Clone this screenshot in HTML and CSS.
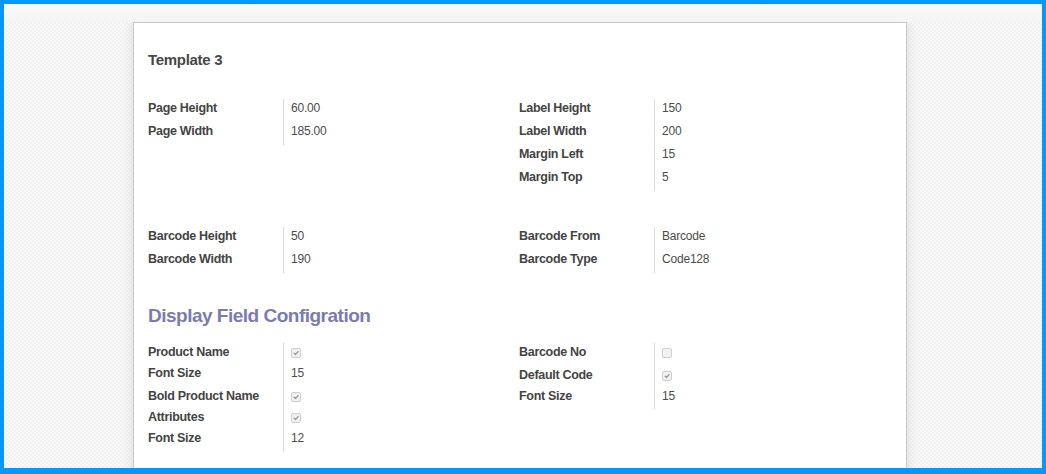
FILE: index.html
```html
<!DOCTYPE html>
<html lang="en">
<head>
<meta charset="utf-8">
<title>Template 3</title>
<link rel="stylesheet" href="styles.css">
</head>
<body>
<div class="frame">
  <div class="topbar"></div>
  <div class="canvas">
    <div class="sheet">
      <h2 class="title">Template 3</h2>

      <div class="groups g-first">
        <div class="group">
          <div class="row"><div class="lbl">Page Height</div><div class="val">60.00</div></div>
          <div class="row"><div class="lbl">Page Width</div><div class="val">185.00</div></div>
        </div>
        <div class="group">
          <div class="row"><div class="lbl">Label Height</div><div class="val">150</div></div>
          <div class="row"><div class="lbl">Label Width</div><div class="val">200</div></div>
          <div class="row"><div class="lbl">Margin Left</div><div class="val">15</div></div>
          <div class="row"><div class="lbl">Margin Top</div><div class="val">5</div></div>
        </div>
      </div>

      <div class="groups g-second">
        <div class="group">
          <div class="row"><div class="lbl">Barcode Height</div><div class="val">50</div></div>
          <div class="row"><div class="lbl">Barcode Width</div><div class="val">190</div></div>
        </div>
        <div class="group">
          <div class="row"><div class="lbl">Barcode From</div><div class="val">Barcode</div></div>
          <div class="row"><div class="lbl">Barcode Type</div><div class="val">Code128</div></div>
        </div>
      </div>

      <h3 class="separator">Display Field Configration</h3>

      <div class="groups g-third">
        <div class="group">
          <div class="row short"><div class="lbl">Product Name</div><div class="val"><span class="cb checked"><svg viewBox="0 0 10 10"><path d="M2.6 5.2 L4.3 6.9 L7.6 3.2"/></svg></span></div></div>
          <div class="row"><div class="lbl">Font Size</div><div class="val">15</div></div>
          <div class="row short"><div class="lbl">Bold Product Name</div><div class="val"><span class="cb checked"><svg viewBox="0 0 10 10"><path d="M2.6 5.2 L4.3 6.9 L7.6 3.2"/></svg></span></div></div>
          <div class="row short"><div class="lbl">Attributes</div><div class="val"><span class="cb checked"><svg viewBox="0 0 10 10"><path d="M2.6 5.2 L4.3 6.9 L7.6 3.2"/></svg></span></div></div>
          <div class="row"><div class="lbl">Font Size</div><div class="val">12</div></div>
        </div>
        <div class="group">
          <div class="row"><div class="lbl">Barcode No</div><div class="val"><span class="cb"></span></div></div>
          <div class="row short"><div class="lbl">Default Code</div><div class="val"><span class="cb checked"><svg viewBox="0 0 10 10"><path d="M2.6 5.2 L4.3 6.9 L7.6 3.2"/></svg></span></div></div>
          <div class="row mid"><div class="lbl">Font Size</div><div class="val">15</div></div>
        </div>
      </div>
    </div>
  </div>
</div>
</body>
</html>
```
FILE: styles.css
```css
* { box-sizing: border-box; }

html, body {
  margin: 0;
  padding: 0;
  background: #ffffff;
}

body {
  font-family: "Liberation Sans", Arial, sans-serif;
  color: #4c4c4c;
}

.frame {
  width: 1046px;
  height: 474px;
  border-style: solid;
  border-color: #0398fc;
  border-width: 4px 4px 6px 4px;
  display: flex;
  flex-direction: column;
  overflow: hidden;
}

.topbar {
  height: 18px;
  flex: none;
  background: linear-gradient(#f9f9f9, #f4f4f4);
}

.canvas {
  flex: 1;
  overflow: hidden;
  padding-left: 129px;
  background-color: #f6f6f6;
  background-image: repeating-conic-gradient(#f1f1f1 0 25%, #f9f9f9 0 50%);
  background-size: 4px 4px;
}

.sheet {
  width: 774px;
  min-height: 520px;
  background: #ffffff;
  border: 1px solid #c8c8d3;
  box-shadow: 0 0 10px rgba(0, 0, 0, 0.12);
  padding: 28px 16px 0 14px;
}

.title {
  margin: 0;
  font-size: 15px;
  line-height: 18px;
  font-weight: bold;
  letter-spacing: -0.3px;
  color: #474747;
}

.groups {
  display: grid;
  grid-template-columns: 1fr 1fr;
  align-items: start;
}

.g-first { margin-top: 30px; }
.g-second { margin-top: 36px; }
.g-third { margin-top: 16px; }

.row {
  display: flex;
  height: 23px;
}

.row.short { height: 21px; }
.row.mid { height: 22px; }

.lbl {
  width: 136px;
  flex: none;
  border-right: 1px solid #dddddd;
  padding-top: 2px;
  font-size: 12.5px;
  line-height: 14px;
  font-weight: bold;
  letter-spacing: -0.3px;
  color: #444444;
}

.val {
  padding-left: 7px;
  padding-top: 2px;
  font-size: 12px;
  line-height: 14px;
  letter-spacing: -0.2px;
  color: #4c4c4c;
}

.separator {
  margin: 32px 0 0 0;
  font-size: 19px;
  line-height: 22px;
  font-weight: bold;
  letter-spacing: -0.5px;
  color: #7c7bad;
}

.cb {
  display: block;
  width: 10px;
  height: 10px;
  margin-top: 3px;
  border: 1px solid #cfcfcf;
  border-radius: 2px;
  background: #f1f1f1;
}

.cb svg {
  display: block;
  width: 8px;
  height: 8px;
}

.cb svg path {
  fill: none;
  stroke: #9a9a9a;
  stroke-width: 1.6;
  stroke-linecap: round;
  stroke-linejoin: round;
}
```
